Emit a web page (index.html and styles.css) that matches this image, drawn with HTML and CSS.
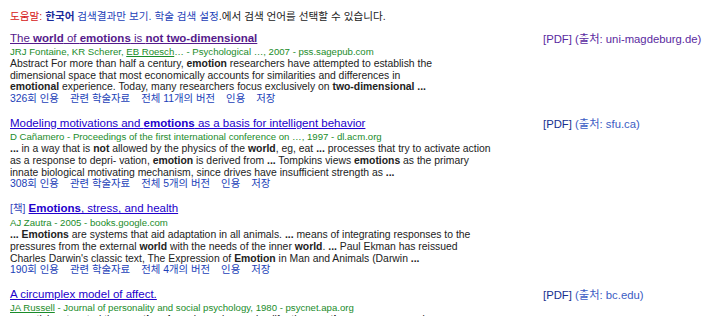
FILE: index.html
```html
<!DOCTYPE html>
<html lang="ko">
<head>
  <meta charset="UTF-8">
  <title>학술 검색 결과</title>
  <link rel="stylesheet" href="styles.css">
</head>
<body>

  <!-- language notice -->
  <div class="notice">
    <span class="help">도움말:</span>
    <a href="#" class="lang"><b>한국어</b> 검색결과만 보기.</a>
    <a href="#" class="lang">학술 검색 설정</a>.에서 검색 언어를 선택할 수 있습니다.
  </div>

  <!-- results -->
  <div class="result">
    <div class="main">
      <h3 class="title"><a href="#" class="visited">The <b>world</b> of <b>emotions</b> is <b>not two-dimensional</b></a></h3>
      <div class="meta">JRJ Fontaine, KR Scherer, <a href="#">EB Roesch</a>… - Psychological …, 2007 - pss.sagepub.com</div>
      <div class="snippet">Abstract For more than half a century, <b>emotion</b> researchers have attempted to establish the<br>dimensional space that most economically accounts for similarities and differences in<br><b>emotional</b> experience. Today, many researchers focus exclusively on <b>two-dimensional ...</b></div>
      <div class="links"><a href="#">326회 인용</a><a href="#">관련 학술자료</a><a href="#">전체 11개의 버전</a><a href="#">인용</a><a href="#">저장</a></div>
    </div>
    <div class="side"><a href="#" class="visited"><span class="tag">[PDF]</span> (출처: uni-magdeburg.de)</a></div>
  </div>

  <div class="result">
    <div class="main">
      <h3 class="title"><a href="#">Modeling motivations and <b>emotions</b> as a basis for intelligent behavior</a></h3>
      <div class="meta">D Cañamero - Proceedings of the first international conference on …, 1997 - dl.acm.org</div>
      <div class="snippet"><b>...</b> in a way that is <b>not</b> allowed by the physics of the <b>world</b>, eg, eat <b>...</b> processes that try to activate action<br>as a response to depri- vation, <b>emotion</b> is derived from <b>...</b> Tompkins views <b>emotions</b> as the primary<br>innate biological motivating mechanism, since drives have insufficient strength as <b>...</b></div>
      <div class="links"><a href="#">308회 인용</a><a href="#">관련 학술자료</a><a href="#">전체 5개의 버전</a><a href="#">인용</a><a href="#">저장</a></div>
    </div>
    <div class="side"><a href="#"><span class="tag">[PDF]</span> (출처: sfu.ca)</a></div>
  </div>

  <div class="result">
    <div class="main">
      <h3 class="title"><span class="kind">[책]</span> <a href="#"><b>Emotions</b>, stress, and health</a></h3>
      <div class="meta">AJ Zautra - 2005 - books.google.com</div>
      <div class="snippet"><b>... Emotions</b> are systems that aid adaptation in all animals. <b>...</b> means of integrating responses to the<br>pressures from the external <b>world</b> with the needs of the inner <b>world</b>. <b>...</b> Paul Ekman has reissued<br>Charles Darwin's classic text, The Expression of <b>Emotion</b> in Man and Animals (Darwin <b>...</b></div>
      <div class="links"><a href="#">190회 인용</a><a href="#">관련 학술자료</a><a href="#">전체 4개의 버전</a><a href="#">인용</a><a href="#">저장</a></div>
    </div>
  </div>

  <div class="result">
    <div class="main">
      <h3 class="title"><a href="#">A circumplex model of affect.</a></h3>
      <div class="meta"><a href="#">JA Russell</a> - Journal of personality and social psychology, 1980 - psycnet.apa.org</div>
      <div class="snippet">... participants rated the <b>emotional</b> words, and everyday life, the <b>emotions</b> were arranged ...</div>
    </div>
    <div class="side"><a href="#"><span class="tag">[PDF]</span> (출처: bc.edu)</a></div>
  </div>

</body>
</html>
```

FILE: styles.css
```css
body {
  margin: 0;
  padding: 8px 10px 0;
  font-family: "Liberation Sans", Arial, "Noto Sans CJK KR", sans-serif;
  font-size: 10.4px;
  color: #222;
  background: #fff;
  overflow: hidden;
}

a {
  color: #1c3fb8;
  text-decoration: none;
}

.notice {
  font-size: 10.6px;
  line-height: 16px;
  margin-bottom: 7px;
}

.notice .help {
  color: #d62020;
}

.notice .lang b {
  color: #1a2a9a;
}

.result {
  display: flex;
  margin-bottom: 11px;
}

.main {
  width: 533px;
}

.title {
  margin: 0;
  font-size: 11.5px;
  font-weight: normal;
  line-height: 14px;
}

.title a {
  color: #2200cc;
  text-decoration: underline;
}

.title a.visited {
  color: #551a8b;
}

.title .kind {
  font-size: 10.4px;
  color: #3344bb;
}

.meta {
  font-size: 9.6px;
  color: #1a8c2a;
  line-height: 13px;
}

.meta a {
  color: #1a8c2a;
  text-decoration: underline;
}

.snippet {
  line-height: 11.7px;
}

.links {
  line-height: 12px;
}

.links a {
  margin-right: 11px;
}

.side {
  padding-top: 1px;
  font-size: 11.3px;
  line-height: 14px;
}

.side a {
  color: #3b5cc4;
}

.side .tag {
  color: #16308f;
}

.side a.visited,
.side a.visited .tag {
  color: #5a2aa0;
}
```
